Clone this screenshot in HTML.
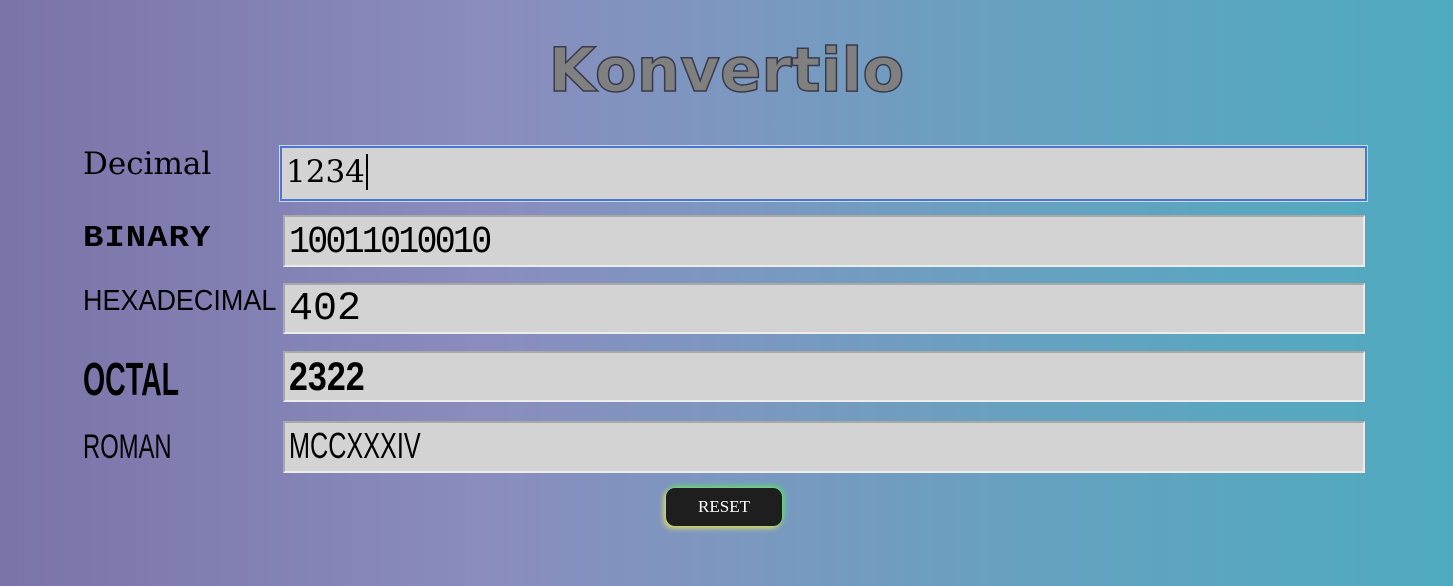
<!DOCTYPE html>
<html><head><style>
html,body{margin:0;padding:0;width:1453px;height:586px;overflow:hidden}
body{background:linear-gradient(90deg,#7a74a8 0%,#8a8cbe 33%,#7c97c0 50%,#62a3c0 75%,#4eaabf 100%);position:relative;font-family:"Liberation Serif",serif}
h1{position:absolute;left:0;width:1453px;top:36px;margin:0;text-align:center;font-family:"DejaVu Sans",sans-serif;font-weight:bold;font-size:61px;line-height:70px;color:#808080;-webkit-text-stroke:1.5px #3a3a4a}
.l{position:absolute;left:83px;color:#000;white-space:nowrap}
.b{position:absolute;left:283px;width:1082px;background:#d3d3d3;border-top:2px solid #a8a8a8;border-left:2px solid #a8a8a8;border-bottom:2px solid #ececec;border-right:2px solid #ececec;box-sizing:border-box;color:#000}
.t{position:absolute;left:4px;white-space:nowrap}
.btn{position:absolute;left:666px;top:488px;width:116px;height:38px;background:#1e1e1e;border-radius:9px;color:#fff;font-size:17px;text-align:center;line-height:38px;box-shadow:-2px 2px 6px #e8e05a,2px -2px 6px #4ed87a}
</style></head><body>
<h1>Konvertilo</h1>
<div class="l" style="top:146px;font-size:31px;font-family:'DejaVu Serif',serif">Decimal</div>
<div class="b" style="top:146px;height:55px;left:280px;width:1087px;border:2px solid #4a78d0;box-shadow:0 0 0 1px #c8d8f0"><span class="t" style="top:6px;font-size:31px;font-family:'DejaVu Serif',serif">1234<span style="border-left:2px solid #000;margin-left:1px"></span></span></div>
<div class="l" style="top:220px;font-size:34px;font-family:'Liberation Mono',monospace;font-weight:bold;letter-spacing:1px;transform:scaleY(0.9)">BINARY</div>
<div class="b" style="top:215px;height:52px"><span class="t" style="top:4px;font-size:38px;font-family:'Liberation Mono',monospace;letter-spacing:-3px;transform:scaleX(0.92);transform-origin:left">10011010010</span></div>
<div class="l" style="top:285px;font-size:29px;font-family:'Liberation Sans',sans-serif;transform:scaleX(0.93);transform-origin:left">HEXADECIMAL</div>
<div class="b" style="top:283px;height:51px"><span class="t" style="top:2px;font-size:40px;font-family:'Liberation Mono',monospace">402</span></div>
<div class="l" style="top:352px;font-size:46px;font-weight:bold;font-family:'Liberation Sans',sans-serif;transform:scaleX(0.62);transform-origin:left">OCTAL</div>
<div class="b" style="top:351px;height:51px"><span class="t" style="top:2px;font-size:40px;font-weight:bold;font-family:'Liberation Sans',sans-serif;display:inline-block;transform:scaleX(0.85);transform-origin:left">2322</span></div>
<div class="l" style="top:428px;font-size:34px;font-family:'Liberation Sans',sans-serif;transform:scaleX(0.7);transform-origin:left">ROMAN</div>
<div class="b" style="top:421px;height:52px"><span class="t" style="top:2px;font-size:36px;font-family:'Liberation Sans',sans-serif;display:inline-block;transform:scaleX(0.7);transform-origin:left">MCCXXXIV</span></div>
<div class="btn">RESET</div>
</body></html>
